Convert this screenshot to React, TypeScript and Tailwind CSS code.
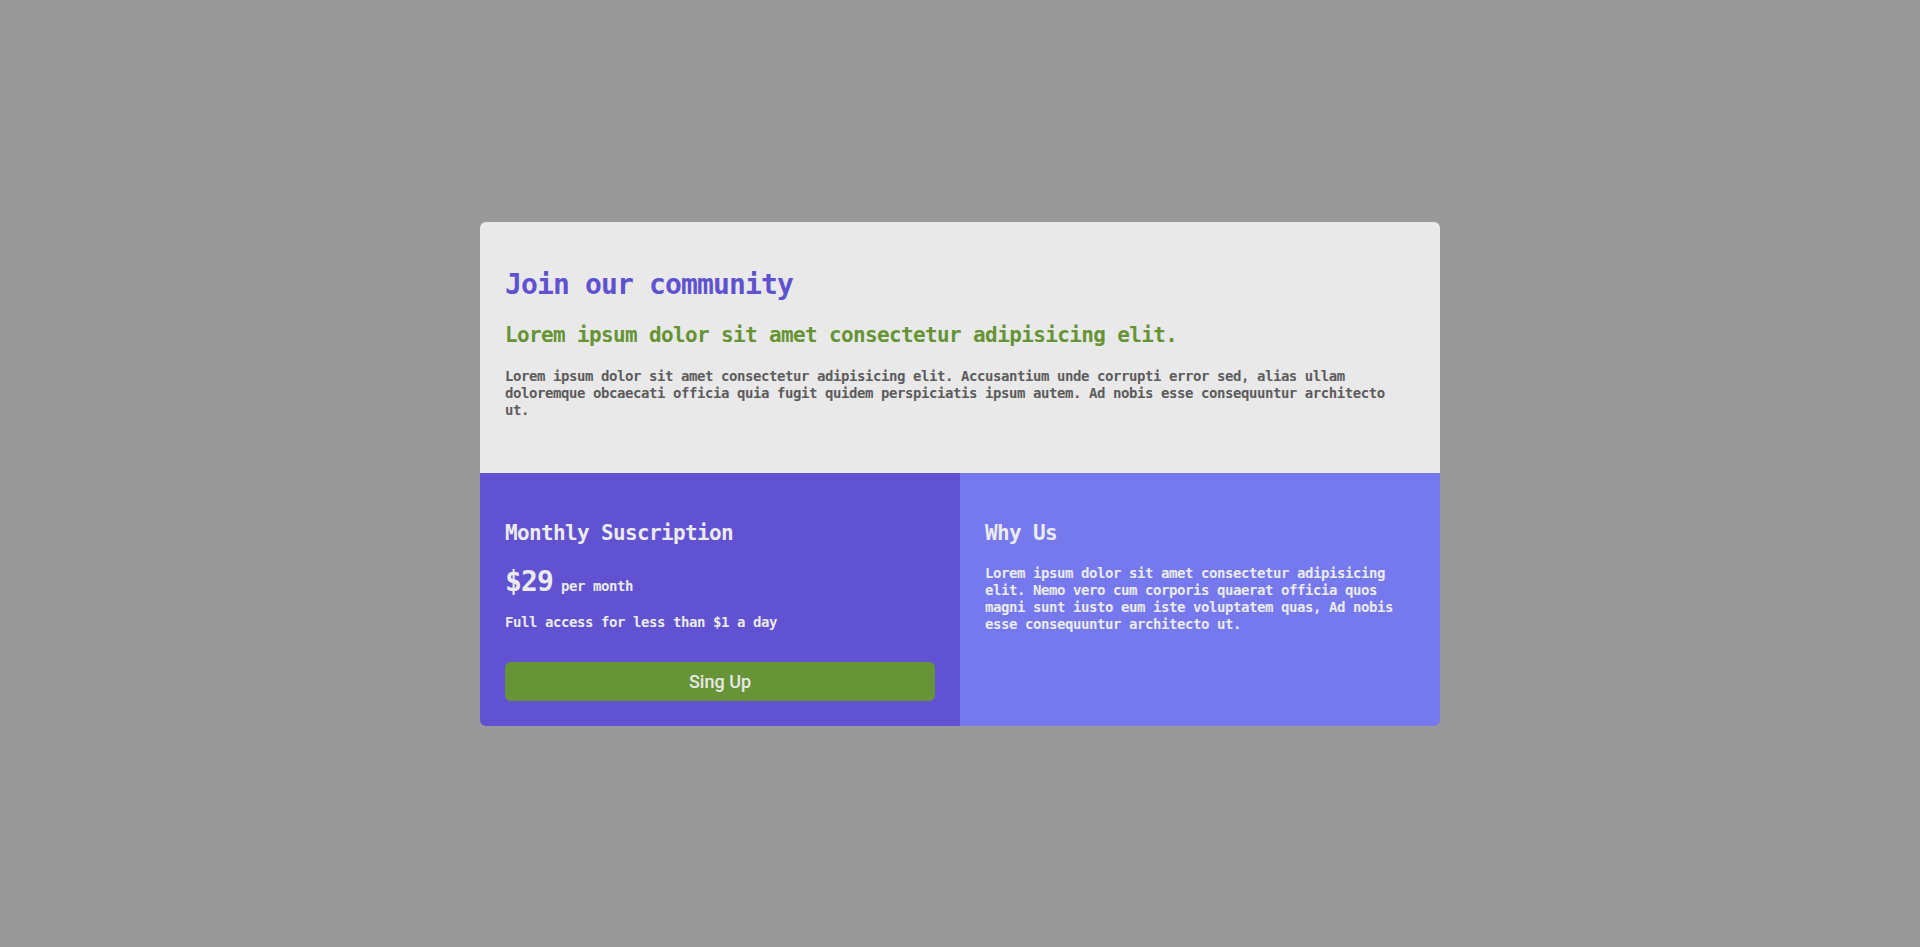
import React from "react";

const mono = "font-['DejaVu_Sans_Mono','Liberation_Mono',monospace] font-bold";

const App = () => {
  return (
    <div className="flex min-h-screen items-center justify-center bg-[#999999]">
      <div className={`flex w-[960px] flex-col overflow-hidden rounded-[6px] ${mono}`}>
        <div className="bg-[#e9e9e9] px-[25px] pt-[45px] pb-[54px]">
          <h1 className="text-[28px] leading-[36px] tracking-[-0.86px] text-[#5f52d1]">
            Join our community
          </h1>
          <h2 className="mt-[18px] text-[21px] leading-[28px] tracking-[-0.64px] text-[#669434]">
            Lorem ipsum dolor sit amet consectetur adipisicing elit.
          </h2>
          <p className="mt-[19px] pr-[10px] text-[14px] leading-[17px] tracking-[-0.43px] text-[#5c5c5c]">
            Lorem ipsum dolor sit amet consectetur adipisicing elit. Accusantium unde corrupti error sed, alias ullam
            doloremque obcaecati officia quia fugit quidem perspiciatis ipsum autem. Ad nobis esse consequuntur architecto
            ut.
          </p>
        </div>
        <div className="grid grid-cols-2 text-[#ebebeb]">
          <div className="bg-[#6052d0] px-[25px] pt-[46px] pb-[25px]">
            <h3 className="text-[21px] leading-[28px] tracking-[-0.64px]">Monthly Suscription</h3>
            <div className="mt-[17px] flex items-baseline gap-[8px]">
              <span className="text-[28px] leading-[36px] tracking-[-0.86px]">$29</span>
              <span className="text-[14px] leading-[17px] tracking-[-0.43px]">per month</span>
            </div>
            <p className="mt-[14px] text-[14px] leading-[17px] tracking-[-0.43px]">
              Full access for less than $1 a day
            </p>
            <button className="mt-[31px] h-[39px] w-full rounded-[6px] bg-[#679436] font-['Roboto',sans-serif] text-[18px] font-medium tracking-normal text-[#e8e8e8]">
              Sing Up
            </button>
          </div>
          <div className="bg-[#7579ed] px-[25px] pt-[46px] pb-[25px]">
            <h3 className="text-[21px] leading-[28px] tracking-[-0.64px]">Why Us</h3>
            <p className="mt-[18px] text-[14px] leading-[17px] tracking-[-0.43px]">
              Lorem ipsum dolor sit amet consectetur adipisicing elit. Nemo vero cum corporis quaerat officia quos magni
              sunt iusto eum iste voluptatem quas, Ad nobis esse consequuntur architecto ut.
            </p>
          </div>
        </div>
      </div>
    </div>
  );
};

export default App;
